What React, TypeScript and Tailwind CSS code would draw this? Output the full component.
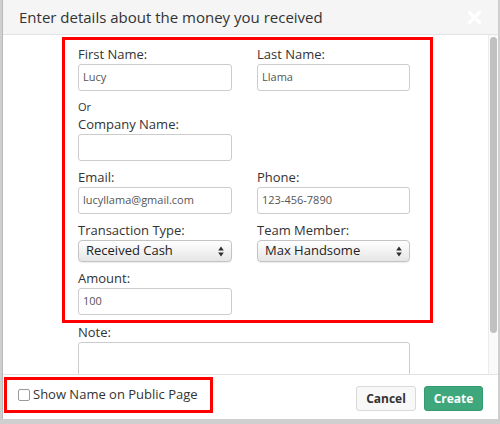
const Arrows = () => (
    <svg width="6" height="11" viewBox="0 0 6 11" className="shrink-0">
        <path d="M3 0.5 L5.8 4.4 H0.2 Z M3 10.5 L5.8 6.6 H0.2 Z" fill="#2f2f2f" />
    </svg>
)

const Label = ({ children }: { children: React.ReactNode }) => (
    <div className="h-[19px] leading-[19px] text-[13px] text-[#333]">{children}</div>
)

const Input = ({ value, w = "w-[154px]" }: { value?: string; w?: string }) => (
    <div className={`${w} h-[27px] border border-[#cccccc] rounded-[3px] bg-white flex items-center px-[4px] text-[11px] text-[#555]`}>
        {value}
    </div>
)

const Select = ({ value, w = "w-[154px]" }: { value: string; w?: string }) => (
    <div className={`${w} h-[22px] border border-[#c4c4c4] rounded-[4px] bg-gradient-to-b from-white to-[#e6e6e6] shadow-[0_1px_1px_rgba(0,0,0,0.08)] flex items-center justify-between pl-[7px] pr-[7px] text-[13px] text-[#222]`}>
        <span>{value}</span>
        <Arrows />
    </div>
)

const App = () => {
    return (
        <div className="w-[500px] h-[424px] bg-[#cfcfcf] overflow-hidden font-['Open_Sans',sans-serif]">
            <div className="ml-[2px] w-[496px] h-[419px] bg-white border-l border-[#b9b9b9] flex flex-col">

                <div className="h-[35px] shrink-0 bg-[#f5f5f5] border-b border-[#e3e3e3] flex items-center justify-between pl-[16px] pr-[17px]">
                    <span className="text-[15px] text-[#333]">Enter details about the money you received</span>
                    <svg width="13" height="13" viewBox="0 0 13 13">
                        <path d="M1.5 1.5 L11.5 11.5 M11.5 1.5 L1.5 11.5" stroke="#ffffff" strokeWidth="3.2" strokeLinecap="round" />
                    </svg>
                </div>

                <div className="h-[339px] shrink-0 flex overflow-hidden">
                    <div className="flex-1 pt-[2px] pl-[59px]">
                        <div className="w-[371px] h-[286px] border-[3px] border-[#ff0000] pt-[5px] pl-[13px]">
                            <div className="flex gap-[25px] mb-[7px]">
                                <div>
                                    <Label>First Name:</Label>
                                    <Input value="Lucy" />
                                </div>
                                <div>
                                    <Label>Last Name:</Label>
                                    <Input value="Llama" w="w-[153px]" />
                                </div>
                            </div>
                            <div className="mb-[7px]">
                                <div className="h-[17px] leading-[17px] text-[11px] text-[#333]">Or</div>
                                <Label>Company Name:</Label>
                                <Input />
                            </div>
                            <div className="flex gap-[25px] mb-[7px]">
                                <div>
                                    <Label>Email:</Label>
                                    <Input value="lucyllama@gmail.com" />
                                </div>
                                <div>
                                    <Label>Phone:</Label>
                                    <Input value="123-456-7890" w="w-[153px]" />
                                </div>
                            </div>
                            <div className="flex gap-[25px] mb-[7px]">
                                <div>
                                    <Label>Transaction Type:</Label>
                                    <Select value="Received Cash" />
                                </div>
                                <div>
                                    <Label>Team Member:</Label>
                                    <Select value="Max Handsome" w="w-[153px]" />
                                </div>
                            </div>
                            <div>
                                <Label>Amount:</Label>
                                <Input value="100" />
                            </div>
                        </div>
                        <div className="pl-[16px]">
                            <Label>Note:</Label>
                            <div className="w-[332px] h-[60px] border border-[#cccccc] rounded-[3px]"></div>
                        </div>
                    </div>
                    <div className="w-[10px] shrink-0 bg-[#fafafa] border-l border-[#ececec] pt-[2px] flex justify-center">
                        <div className="w-[7px] h-[296px] rounded-full bg-[#c1c1c1]"></div>
                    </div>
                </div>

                <div className="flex-1 border-t border-[#e3e3e3] flex items-start justify-between pr-[15px]">
                    <div className="mt-[2px] ml-[1px] w-[209px] h-[36px] border-[3px] border-[#ff0000] flex items-center pl-[11px] gap-[3px]">
                        <div className="w-[12px] h-[12px] border border-[#9a9a9a] rounded-[2px] bg-white"></div>
                        <span className="text-[13px] text-[#333] whitespace-nowrap">Show Name on Public Page</span>
                    </div>
                    <div className="mt-[11px] flex gap-[8px]">
                        <button className="w-[60px] h-[25px] rounded-[3px] border border-[#d9d9d9] bg-[#f8f8f8] text-[12px] font-bold text-[#333]">Cancel</button>
                        <button className="w-[59px] h-[25px] rounded-[3px] border border-[#359a70] bg-[#3ea77c] text-[12px] font-bold text-white">Create</button>
                    </div>
                </div>
            </div>
        </div>
    )
}

export default App
